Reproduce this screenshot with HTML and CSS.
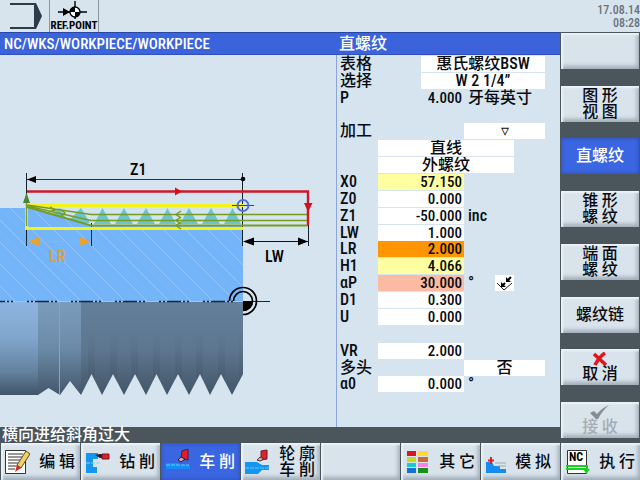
FILE: index.html
```
<!DOCTYPE html>
<html lang="zh-CN">
<head>
<meta charset="utf-8">
<title>直螺纹</title>
<link rel="stylesheet" href="styles.css">
</head>
<body>
<header class="top">
  <svg class="mode" viewBox="0 0 49 32" aria-hidden="true">
    <path d="M10 4H35M10 28H35" stroke="#2b3b49" stroke-width="2" fill="none"/>
    <path d="M34 3H36L42 16L36 29H34Z" fill="#2b3b49"/>
  </svg>
  <div class="ref">
    <svg class="ref-icon" viewBox="0 0 48 20" aria-hidden="true">
      <path d="M8 12H37M25 1V19" stroke="#000" stroke-width="1.4"/>
      <path d="M13 8L20 12L13 16Z" fill="#000"/>
      <circle cx="25" cy="12" r="5" fill="#fff" stroke="#000" stroke-width="1.4"/>
      <path d="M25 12V7A5 5 0 0 0 20 12ZM25 12V17A5 5 0 0 0 30 12Z" fill="#000"/>
    </svg>
    <span class="ref-text">REF.POINT</span>
  </div>
  <div class="clock"><span>17.08.14</span><span>08:28</span></div>
</header>

<div class="middle">
  <div class="work">
    <div class="titles"><h1 class="path">NC/WKS/WORKPIECE/WORKPIECE</h1><h2 class="form-title">直螺纹</h2></div>
    <main class="content">
      <svg class="drawing" viewBox="0 55 336 372" role="img" aria-label="Z1 LR LW">
        <defs>
          <pattern id="hatch" width="22" height="22" patternUnits="userSpaceOnUse">
            <path d="M-2 -2L24 24M-2 20L2 24M20 -2L24 2" stroke="#a2cffd" stroke-width="1" opacity=".65"/>
            <path d="M9 -2L24 13M-2 9L13 24" stroke="#86bffb" stroke-width="1" opacity=".45"/>
          </pattern>
          <linearGradient id="g1" x2="0" y2="1"><stop offset="0" stop-color="#8eb4e2"/><stop offset=".4" stop-color="#81a5cb"/><stop offset=".75" stop-color="#62819e"/><stop offset="1" stop-color="#3e5366"/></linearGradient>
          <linearGradient id="g2" x2="0" y2="1"><stop offset="0" stop-color="#7b9dbd"/><stop offset=".5" stop-color="#6b8aa7"/><stop offset="1" stop-color="#435669"/></linearGradient>
          <linearGradient id="g3" x2="0" y2="1"><stop offset="0" stop-color="#637f9a"/><stop offset=".5" stop-color="#5e7790"/><stop offset="1" stop-color="#435567"/></linearGradient>
          <linearGradient id="shade" x2="0" y2="1"><stop offset="0" stop-color="#3f5264" stop-opacity="0"/><stop offset="1" stop-color="#3f5264" stop-opacity=".4"/></linearGradient>
          <clipPath id="thread"><path d="M0 301H243V374L232 395L221 374L210 395L200 374L189 395L178 374L167 395L156.500 374L146 395L135 374L124 395L113 374L102 395L91.500 374L81 395L70 381L60 395L48.500 388L38 395H0Z"/></clipPath>
        </defs>
        <path d="M0 208H243V301H0Z" fill="#74b4f8"/>
        <path d="M0 208H243V301H0Z" fill="url(#hatch)"/>
        <g clip-path="url(#thread)">
          <path d="M0 301H38V396H0Z" fill="url(#g1)"/>
          <path d="M38 301H81V396H38Z" fill="url(#g2)"/>
          <path d="M81 301H243V396H81Z" fill="url(#g3)"/>
          <path d="M59.500 301V395" stroke="#86a3bf"/>
          <path d="M88 330H95V395H88ZM110 330H117V395H110ZM131 330H138V395H131ZM153 330H160V395H153ZM175 330H182V395H175ZM196 330H203V395H196ZM218 330H225V395H218ZM239 330H243V395H239Z" fill="url(#shade)"/>
        </g>
        <path d="M0 301.500H243" stroke="#9cc4ee"/>
        <path d="M0 301.500H243" stroke="#15273c" stroke-width="1.500" stroke-dasharray="14 2 2 2 2" stroke-dashoffset="9"/>
        <path d="M243 301.500H270" stroke="#222"/>
        <g fill="none" stroke="#000" stroke-width="1.700">
          <path d="M229.500 301A13.500 13.500 0 1 1 243 314.500"/>
          <path d="M233.500 301A9.500 9.500 0 1 1 243 310.500"/>
        </g>
        <path d="M243 301H253A10 10 0 0 1 243 311Z" fill="#000"/>

        <path d="M27 206H243V226H91Z" fill="#d3e5ec"/>
        <g fill="#6cc4cc">
          <path d="M81 208L90 223H78L70 219ZM102.500 208L111 224H94ZM124 208L133 224H115ZM146 208L155 224H137ZM167.500 208L176 224H159ZM189 208L198 224H180ZM211 208L220 224H202ZM232.500 208L241 224H224Z"/>
          <path d="M59 208L66 218L52 215Z"/>
        </g>
        <path d="M26.500 173V246M242.500 173V246M91.500 223V246M308.500 225V246" stroke="#18202c"/>
        <path d="M27 179.500H243" stroke="#30303c"/>
        <path d="M27 179.500L36 176V183Z"/><circle cx="243" cy="179" r="2.300"/>
        <path d="M243 205.500H26.500V228.500H243" fill="none" stroke="#f4f21b" stroke-width="3"/>
        <g fill="none" stroke="#769c24">
          <path d="M27 205L91 214.500H308M27 206L91 220.500H308" stroke-width="1.600"/>
          <path d="M27 207L91 225.500H308" stroke-width="2.200"/>
          <path d="M181 211L176 214.500L181 218M181 217L176 220.500L181 224M181 222L176 225.500L181 229M50 207L55 210L49 212M60 209L65 213L60 217" stroke-width="1.500"/>
          <path d="M26.500 194V226" stroke-width="1.300"/>
        </g>
        <path d="M26.500 193L30 203H23Z" fill="#49833c"/>
        <path d="M27 191.500H308V225" fill="none" stroke="#cf1728" stroke-width="2.400"/>
        <path d="M175 187.500L182 191.500L175 195.500ZM304 203H312.500L308 212Z" fill="#d5101d"/>
        <path d="M232 205.500H254" stroke="#3c4350"/>
        <circle cx="243" cy="205.500" r="5.500" fill="none" stroke="#4f70db" stroke-width="2"/>
        <path d="M30 241.500H89" stroke="#e4a54d" stroke-dasharray="4 1"/>
        <path d="M28 241.500L39 237V246ZM91 241.500L80 237V246Z" fill="#eda22d"/>
        <path d="M244 241.500H308" stroke="#111"/>
        <path d="M243 241.500L254 237.500V245.500ZM308 241.500L298 237.500V245.500Z"/>
        <text class="dim" x="130" y="175">Z1</text>
        <text class="dim dim-lr" x="49" y="262">LR</text>
        <text class="dim" x="265" y="262">LW</text>
      </svg>

      <form class="form">
        <label class="r1" for="tab">表格</label><select class="r1 mid" id="tab"><option>惠氏螺纹BSW</option></select>
        <label class="r2" for="sel">选择</label><select class="r2 mid" id="sel"><option>W 2 1/4”</option></select>
        <span class="r3 name">P</span><output class="r3 num">4.000</output><span class="r3 unit">牙每英寸</span>
        <label class="r5" for="mach">加工</label><select class="r5 right" id="mach"><option>▿</option></select>
        <select class="r6 wide" aria-label="直线"><option>直线</option></select>
        <select class="r7 wide" aria-label="外螺纹"><option>外螺纹</option></select>
        <label class="r8" for="x0">X0</label><input class="r8 num yellow" id="x0" value="57.150">
        <label class="r9" for="z0">Z0</label><input class="r9 num" id="z0" value="0.000">
        <label class="r10" for="z1">Z1</label><input class="r10 num" id="z1" value="-50.000"><span class="r10 unit">inc</span>
        <label class="r11" for="lw">LW</label><input class="r11 num" id="lw" value="1.000">
        <label class="r12" for="lr">LR</label><input class="r12 num orange" id="lr" value="2.000">
        <label class="r13" for="h1">H1</label><input class="r13 num yellow" id="h1" value="4.066">
        <label class="r14" for="ap">αP</label><input class="r14 num pink" id="ap" value="30.000"><span class="r14 unit">°</span>
        <button class="r14 infeed" type="button" aria-label="αP">
          <svg viewBox="0 0 19 16" aria-hidden="true"><path d="M2 8L9 15L17 8" fill="none" stroke="#222"/><path d="M16 2L12 6M10 8L7 11" stroke="#000" stroke-width="2"/><path d="M11 2V7H16ZM6 7V12H11Z"/></svg>
        </button>
        <label class="r15" for="d1">D1</label><input class="r15 num" id="d1" value="0.300">
        <label class="r16" for="u">U</label><input class="r16 num" id="u" value="0.000">
        <label class="r18" for="vr">VR</label><input class="r18 num" id="vr" value="2.000">
        <label class="r19" for="multi">多头</label><select class="r19 right" id="multi"><option>否</option></select>
        <label class="r20" for="a0">α0</label><input class="r20 num" id="a0" value="0.000"><span class="r20 unit">°</span>
      </form>
    </main>
    <p class="message">横向进给斜角过大</p>
  </div>

  <nav class="side">
    <button class="key" type="button" aria-label="空"></button>
    <button class="key" type="button">图 形<br>视 图</button>
    <button class="key active" type="button">直螺纹</button>
    <button class="key" type="button">锥 形<br>螺 纹</button>
    <button class="key" type="button">端 面<br>螺 纹</button>
    <button class="key" type="button">螺纹链</button>
    <button class="key" type="button">
      <svg class="mark" viewBox="0 0 20 14" aria-hidden="true"><path d="M4 2L16 13M15 1Q9 5 5 13" fill="none" stroke="#e2141b" stroke-width="3.500"/></svg>
      取 消</button>
    <button class="key" type="button" disabled>
      <svg class="mark" viewBox="0 0 20 14" aria-hidden="true"><path d="M0 8L4 6L7 9Q12 3 19 0Q12 6 8 14H6Z" fill="#858c92"/></svg>
      接 收</button>
  </nav>
</div>

<nav class="bottom">
  <button class="key" type="button">
    <svg class="icon" viewBox="0 0 26 26" aria-hidden="true"><path d="M1.500 1.500H21.500V24.500H1.500Z" fill="#fff" stroke="#333"/><path d="M4 5H19M4 8H19M4 11H17M4 14H15M4 17H13M4 20H11" stroke="#333"/><path d="M22 2L26 5L17 19L13 16Z" fill="#efd06a" stroke="#62491d"/><path d="M13 16L17 19L11 23Z" fill="#d42a23"/></svg>
    <span>编 辑</span></button>
  <button class="key" type="button">
    <svg class="icon" viewBox="0 0 26 26" aria-hidden="true"><path d="M2 4H14V10H9V18H13V24H2Z" fill="#1397ee"/><path d="M2 14H16" stroke="#8ed0ff" stroke-dasharray="4 1"/><path d="M11 6L16 5H19V9H16Z" fill="#231b20"/><path d="M18 5H25V10H18Z" fill="#e71c2c" stroke="#6e1b23"/></svg>
    <span>钻 削</span></button>
  <button class="key active" type="button">
    <svg class="icon" viewBox="0 0 26 26" aria-hidden="true"><path d="M2 14H14V16H26V20H2Z" fill="#168cf6"/><path d="M2 16H25" stroke="#54d9e9" stroke-dasharray="4 1"/><path d="M18 2L24 0V11L17 10Z" fill="#e61b28" stroke="#501a33"/><path d="M17 8L21 10L17 13L14 11Z" fill="#d3a89d" stroke="#26182d"/></svg>
    <span>车 削</span></button>
  <button class="key" type="button">
    <svg class="icon" viewBox="0 0 26 26" aria-hidden="true"><path d="M1 13H13L18 16H25V21H18L14 25H1Z" fill="#1595f2"/><path d="M1 19H25" stroke="#5fc7fb" stroke-dasharray="4 1"/><path d="M17 2L23 1V10L17 11Z" fill="#df222a" stroke="#671c20"/><path d="M16 8L20 10L16 12L13 11Z" fill="#dfb0a9" stroke="#493034"/></svg>
    <span>轮 廓<br>车 削</span></button>
  <button class="key" type="button" aria-label="空"></button>
  <button class="key" type="button">
    <svg class="icon" viewBox="0 0 26 26" aria-hidden="true"><path d="M3 2H12V7H3Z" fill="#d91724"/><path d="M14 2H24V7H14Z" fill="#ffd931"/><path d="M3 8H12V13H3Z" fill="#c3dc20"/><path d="M14 8H24V13H14Z" fill="#cb6a36"/><path d="M3 14H12V18H3Z" fill="#16c9d2"/><path d="M14 14H24V18H14Z" fill="#f383e8"/><path d="M3 19H12V24H3Z" fill="#176ed8"/><path d="M14 19H24V24H14Z" fill="#168f1d"/></svg>
    <span>其 它</span></button>
  <button class="key wide-key" type="button">
    <svg class="icon" viewBox="0 0 26 26" aria-hidden="true"><path d="M2 13H8L10 17H16V20H22V24H2Z" fill="#178cf0"/><path d="M11 14H22M14 17H22" stroke="#aaa7a5"/><path d="M7 8V15M4 11.500H10" stroke="#e11c29" stroke-width="2"/></svg>
    <span>模 拟</span></button>
  <button class="key" type="button">
    <svg class="icon" viewBox="0 0 26 26" aria-hidden="true"><path d="M3.500 1.500H22.500V24.500H3.500Z" fill="#fff" stroke="#333"/><text class="nc" x="5" y="12">NC</text><path d="M2 17H23V21M2 20H22" fill="none" stroke="#1bcf22" stroke-width="2"/><path d="M19 20H26L22.500 25Z" fill="#1bcf22"/></svg>
    <span>执 行</span></button>
</nav>
</body>
</html>
```
FILE: styles.css
```
* { box-sizing: border-box; }

body {
  margin: 0;
  height: 100vh;
  display: flex;
  flex-direction: column;
  overflow: hidden;
  background: #4a555c;
  color: #080c12;
  font: 500 16px/16px "Liberation Sans Narrow", "Roboto Condensed", "Noto Sans CJK SC", sans-serif;
}

button, input, select {
  margin: 0;
  padding: 0;
  border: 0;
  border-radius: 0;
  appearance: none;
  color: inherit;
  font: inherit;
}

h1, h2, p { margin: 0; font: inherit; }

.top {
  flex: 0 0 32px;
  display: flex;
  background: #d7e4ee;
}
.mode { width: 49px; height: 32px; }
.ref {
  width: 50px;
  display: flex;
  flex-direction: column;
  align-items: center;
  border: solid #8a959e;
  border-width: 0 1px;
}
.ref-icon { width: 48px; height: 20px; }
.ref-text { font-size: 11px; line-height: 12px; font-weight: bold; color: #000; }
.clock {
  margin-left: auto;
  padding-top: 4px;
  display: flex;
  flex-direction: column;
  text-align: right;
  color: #68737d;
  font-size: 12px;
  line-height: 13px;
}

.middle { flex: 1; min-height: 0; display: flex; }
.work { flex: 1; min-width: 0; display: flex; flex-direction: column; }
.titles {
  flex: 0 0 23px;
  display: flex;
  align-items: center;
  background: #3a63dc;
  border-top: 1px solid #2846a4;
  border-bottom: 1px solid #3151b8;
  color: #fff;
}
.path { width: 60%; padding-left: 4px; font-size: 15px; }
.form-title { padding-left: 3px; }
.content {
  flex: 1;
  min-height: 0;
  display: flex;
  background: #d6e4ef;
}
.drawing { width: 60%; height: 100%; }
.dim { font-size: 16px; }
.dim-lr { fill: #df9d3e; }

.form {
  width: 40%;
  padding: 1px 0 0 3px;
  border-left: 1px solid #8ba4d9;
  display: grid;
  grid-template-columns: 38px 43px 43px 50px 31px;
  grid-template-rows: repeat(22, minmax(0, 1fr));
  white-space: nowrap;
}
.form label, .name { grid-column: 1; }
.form input, .form select {
  width: 100%;
  height: 16px;
  background: #fff;
}
.form select { text-align: center; text-align-last: center; }
.form .num { grid-column: 2 / 4; text-align: right; padding-right: 2px; font-size: 15px; }
.form .mid { grid-column: 3 / 6; }
.form .wide { grid-column: 2 / 5; }
.form .right { grid-column: 4 / 6; }
.unit { grid-column: 4 / 6; padding-left: 4px; }
.form .yellow { background: #ffffa2; }
.form .orange { background: #ff9500; }
.form .pink { background: #fabba2; }
.infeed {
  grid-column: 4 / 6;
  justify-self: center;
  width: 19px;
  height: 16px;
  background: #fff;
}
.infeed svg { display: block; width: 19px; height: 16px; }
.r1 { grid-row: 1; }
.r2 { grid-row: 2; }
.r3 { grid-row: 3; }
.r5 { grid-row: 5; }
.r6 { grid-row: 6; }
.r7 { grid-row: 7; }
.r8 { grid-row: 8; }
.r9 { grid-row: 9; }
.r10 { grid-row: 10; }
.r11 { grid-row: 11; }
.r12 { grid-row: 12; }
.r13 { grid-row: 13; }
.r14 { grid-row: 14; }
.r15 { grid-row: 15; }
.r16 { grid-row: 16; }
.r18 { grid-row: 18; }
.r19 { grid-row: 19; }
.r20 { grid-row: 20; }

.message { flex: 0 0 16px; padding-left: 2px; color: #fff; }

.side {
  width: 12.5%;
  padding: 1px 1px 5px 1px;
  display: flex;
  flex-direction: column;
  justify-content: space-between;
}
.key {
  height: 36px;
  background: #d8e3ec;
  box-shadow: inset 2px 2px 2px #ecf3f8, inset -2px -3px 4px #9fabb6;
  white-space: nowrap;
}
.key.active {
  background: #3b66e2;
  box-shadow: inset 0 0 4px #2a4cb4;
  color: #fff;
}
.key:disabled { color: #a5adb4; }
.mark { display: block; width: 20px; height: 14px; margin: 0 auto; }

.bottom {
  flex: 0 0 37px;
  display: grid;
  grid-template-columns: repeat(8, minmax(0, 1fr));
  gap: 1px;
  padding-left: 1px;
}
.bottom .key {
  height: 37px;
  padding: 0 5px 0 3px;
  display: flex;
  align-items: center;
  justify-content: space-between;
}
.bottom .wide-key { padding-right: 9px; }
.icon { width: 26px; height: 26px; flex: none; }
.nc { font-size: 12px; font-weight: bold; }
```
